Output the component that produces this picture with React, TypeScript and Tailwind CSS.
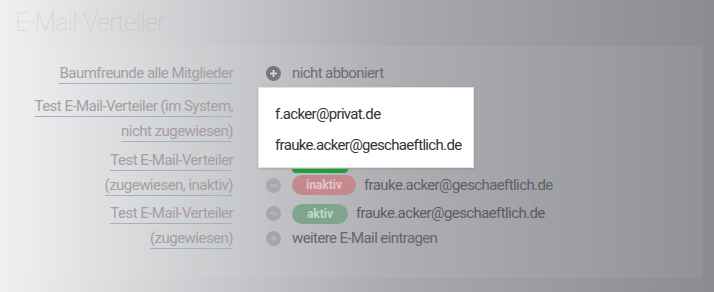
import React from "react";

const font = { fontFamily: "Roboto, 'Liberation Sans', sans-serif" };

function Circle({ kind, fill, mark }: { kind: "plus" | "minus"; fill: string; mark: string }) {
  return (
    <svg width="15" height="15" viewBox="0 0 15 15" className="shrink-0">
      <circle cx="7.5" cy="7.5" r="7.5" fill={fill} />
      <rect x="4" y="6.6" width="7" height="1.8" fill={mark} />
      {kind === "plus" && <rect x="6.6" y="4" width="1.8" height="7" fill={mark} />}
    </svg>
  );
}

function Label({ lines }: { lines: string[] }) {
  return (
    <div className="w-[219px] shrink-0 text-right text-[15px] leading-[25px] tracking-[-0.035em] text-[#a39ea3]">
      {lines.map((l, i) => (
        <div key={i}>
          <span className="border-b border-[#9fb2c2] pb-[1px]">{l}</span>
        </div>
      ))}
    </div>
  );
}

export default function App() {
  return (
    <div
      className="relative w-[714px] h-[292px] overflow-hidden bg-[linear-gradient(90deg,#f0f0f1_0%,#c9cacd_30%,#a9aaaf_55%,#8b8c91_100%)]"
      style={font}
    >
      <div className="pl-[15px] pt-[8px] h-[46px] text-[25px] font-light leading-[30px] tracking-[-0.04em] text-black/[0.07]">
        E-Mail-Verteiler
      </div>
      <div className="ml-[14px] w-[688px] h-[232px] bg-white/[0.06] pt-[15px]">
        {/* Row 1 */}
        <div className="flex mb-[8px]">
          <Label lines={["Baumfreunde alle Mitglieder"]} />
          <div className="ml-[33px] flex items-center h-[25px] gap-[11px] text-[15px] tracking-[-0.04em] text-[#6d6d72]">
            <Circle kind="plus" fill="#76767b" mark="#d8d8da" />
            <span>nicht abboniert</span>
          </div>
        </div>
        {/* Row 2 */}
        <div className="flex mb-[4px]">
          <Label lines={["Test E-Mail-Verteiler (im System,", "nicht zugewiesen)"]} />
        </div>
        {/* Row 3 */}
        <div className="flex mb-[3px]">
          <Label lines={["Test E-Mail-Verteiler", "(zugewiesen, inaktiv)"]} />
          <div className="ml-[33px] flex flex-col text-[15px] tracking-[-0.04em]">
            <div className="flex items-end h-[25px] gap-[11px]">
              <span className="w-[15px]" />
              <span className="h-[4px] w-[56px] rounded-b-full bg-[#22a03c]" />
            </div>
            <div className="flex items-center h-[24px] gap-[11px]">
              <Circle kind="minus" fill="#a9aaae" mark="#bdbec2" />
              <span className="flex items-center justify-center h-[20px] w-[64px] rounded-full bg-[#c4898f] text-[12px] font-bold tracking-normal text-[#e3c5c8]">
                inaktiv
              </span>
              <span className="-ml-[3px] text-[#5f5f64]">frauke.acker@geschaeftlich.de</span>
            </div>
          </div>
        </div>
        {/* Row 4 */}
        <div className="flex">
          <Label lines={["Test E-Mail-Verteiler", "(zugewiesen)"]} />
          <div className="ml-[33px] flex flex-col text-[15px] tracking-[-0.04em]">
            <div className="flex items-center h-[25px] gap-[11px]">
              <Circle kind="minus" fill="#a6a7ab" mark="#b8b9bd" />
              <span className="flex items-center justify-center h-[20px] w-[56px] rounded-full bg-[#7fa68b] text-[12px] font-bold tracking-normal text-[#c4d6ca]">
                aktiv
              </span>
              <span className="-ml-[3px] text-[#5c5c61]">frauke.acker@geschaeftlich.de</span>
            </div>
            <div className="flex items-center h-[25px] gap-[11px] text-[#66666b]">
              <Circle kind="plus" fill="#a3a4a8" mark="#b5b6ba" />
              <span>weitere E-Mail eintragen</span>
            </div>
          </div>
        </div>
      </div>
      {/* Dropdown */}
      <div className="absolute left-[258px] top-[87px] w-[216px] h-[81px] bg-white border border-[#e2e2e2] shadow-sm pl-[16px] pt-[13px] text-[15px] tracking-[-0.045em] text-[#333]">
        <div className="h-[31px] leading-[26px]">f.acker@privat.de</div>
        <div className="leading-[26px]">frauke.acker@geschaeftlich.de</div>
      </div>
    </div>
  );
}
